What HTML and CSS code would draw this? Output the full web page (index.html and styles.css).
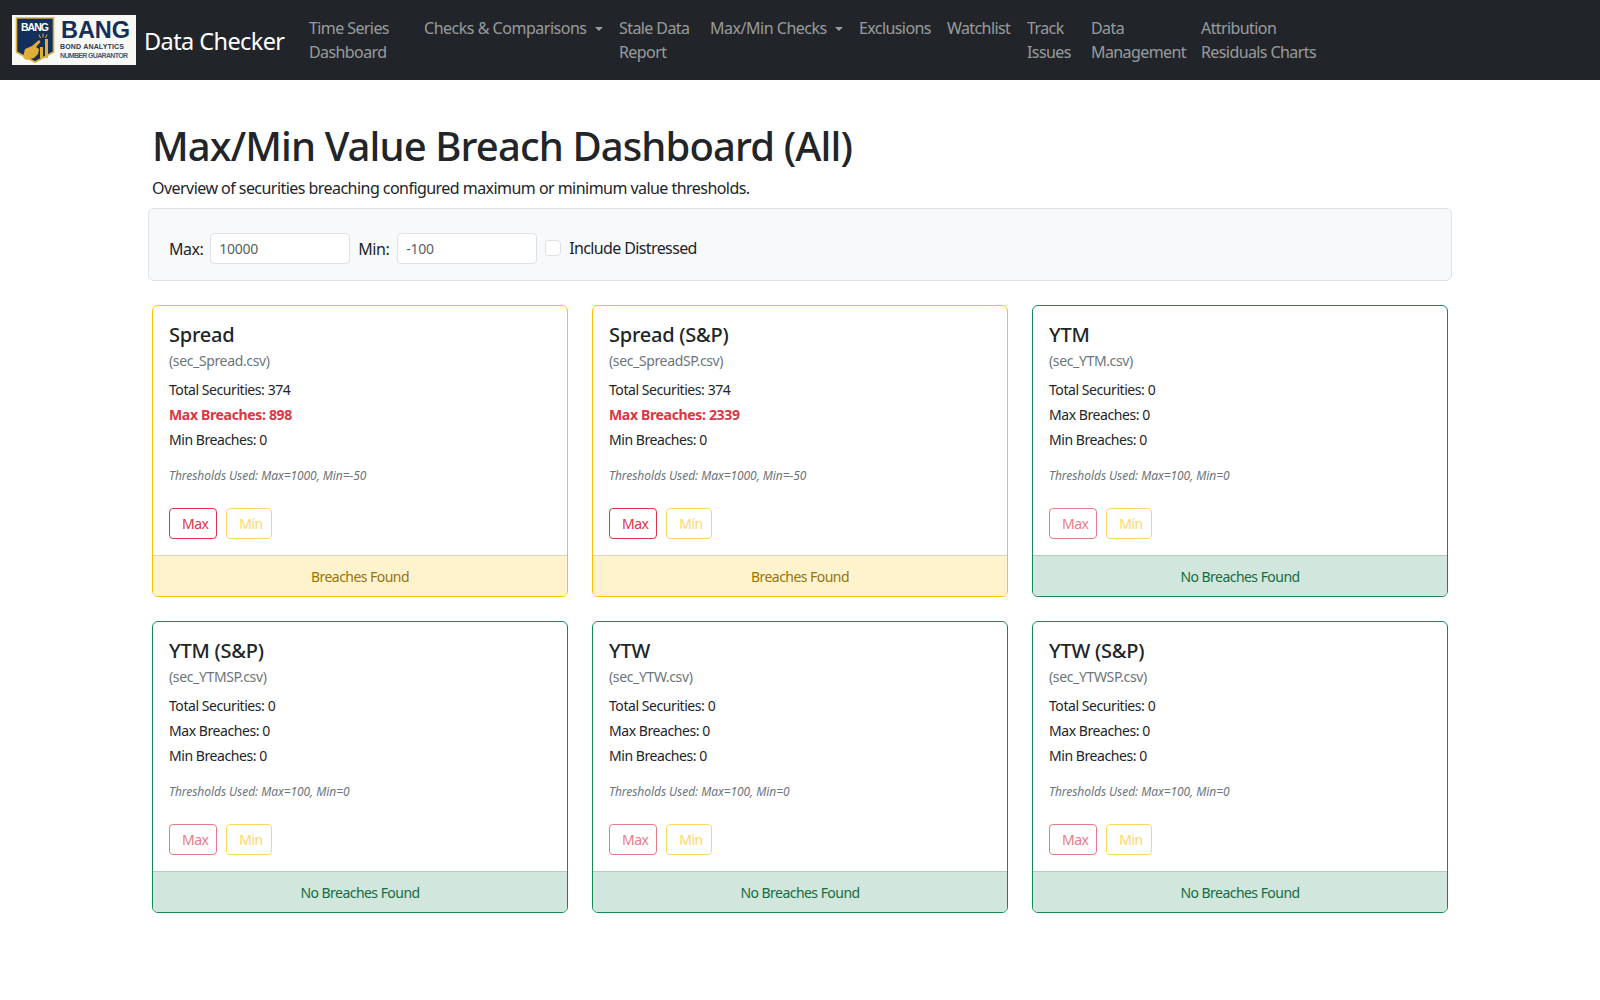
FILE: index.html
```html
<!DOCTYPE html>
<html lang="en">
<head>
    <meta charset="UTF-8">
    <meta name="viewport" content="width=device-width, initial-scale=1.0">
    <title>Max/Min Value Breach Dashboard</title>
    <link rel="stylesheet" href="styles.css">
</head>
<body>
    <nav class="navbar">
        <a class="brand" href="#">
            <svg class="logo" width="124" height="50" viewBox="0 0 124 50">
                <rect width="124" height="50" fill="#f8f8f5"/>
                <path d="M4.5 3H41.5V37L23 47L4.5 37Z" fill="#14305a" stroke="#d8ac3a" stroke-width="1.6"/>
                <text x="23" y="16" class="logo-small" textLength="28">BANG</text>
                <path d="M11 42L13 34L20 31L27 25L28.5 27L24 32L27 34L26 39L22 43L14 45Z" fill="#e0ae35"/>
                <rect x="28" y="32" width="3" height="11" fill="#e0ae35"/>
                <rect x="33" y="24" width="3" height="19" fill="#e0ae35"/>
                <path d="M27 19.5L28.5 23M31 18.5V22.5M35 19.5L33.5 23" stroke="#e0ae35" stroke-width="1"/>
                <text x="49" y="23" class="logo-big" textLength="69">BANG</text>
                <text x="48" y="34" class="logo-line" textLength="64">BOND ANALYTICS</text>
                <text x="48" y="42.5" class="logo-line logo-line-low" textLength="68">NUMBER GUARANTOR</text>
            </svg>
            <span>Data Checker</span>
        </a>
        <ul class="nav-list">
            <li><a href="#">Time Series<br>Dashboard</a></li>
            <li><a href="#" class="dropdown">Checks &amp; Comparisons</a></li>
            <li><a href="#">Stale Data<br>Report</a></li>
            <li><a href="#" class="dropdown">Max/Min Checks</a></li>
            <li><a href="#">Exclusions</a></li>
            <li><a href="#">Watchlist</a></li>
            <li><a href="#">Track<br>Issues</a></li>
            <li><a href="#">Data<br>Management</a></li>
            <li><a href="#">Attribution<br>Residuals Charts</a></li>
        </ul>
    </nav>

    <main class="container">
        <h1>Max/Min Value Breach Dashboard (All)</h1>
        <p class="lead-text">Overview of securities breaching configured maximum or minimum value thresholds.</p>

        <form class="filters">
            <label for="max">Max:</label>
            <input id="max" type="text" value="10000">
            <label for="min">Min:</label>
            <input id="min" type="text" value="-100">
            <input id="distressed" class="check" type="checkbox">
            <label for="distressed" class="check-label">Include Distressed</label>
        </form>

        <div class="cards">
            <div class="card warn">
                <div class="card-body">
                    <h5>Spread</h5>
                    <h6>(sec_Spread.csv)</h6>
                    <p>Total Securities: 374</p>
                    <p class="breach">Max Breaches: 898</p>
                    <p>Min Breaches: 0</p>
                    <p class="thresholds">Thresholds Used: Max=1000, Min=-50</p>
                    <div class="buttons"><a class="btn btn-max" href="#">Max</a><a class="btn btn-min" href="#">Min</a></div>
                </div>
                <div class="card-footer">Breaches Found</div>
            </div>
            <div class="card warn">
                <div class="card-body">
                    <h5>Spread (S&amp;P)</h5>
                    <h6>(sec_SpreadSP.csv)</h6>
                    <p>Total Securities: 374</p>
                    <p class="breach">Max Breaches: 2339</p>
                    <p>Min Breaches: 0</p>
                    <p class="thresholds">Thresholds Used: Max=1000, Min=-50</p>
                    <div class="buttons"><a class="btn btn-max" href="#">Max</a><a class="btn btn-min" href="#">Min</a></div>
                </div>
                <div class="card-footer">Breaches Found</div>
            </div>
            <div class="card ok">
                <div class="card-body">
                    <h5>YTM</h5>
                    <h6>(sec_YTM.csv)</h6>
                    <p>Total Securities: 0</p>
                    <p>Max Breaches: 0</p>
                    <p>Min Breaches: 0</p>
                    <p class="thresholds">Thresholds Used: Max=100, Min=0</p>
                    <div class="buttons"><a class="btn btn-max off" href="#">Max</a><a class="btn btn-min off" href="#">Min</a></div>
                </div>
                <div class="card-footer">No Breaches Found</div>
            </div>
            <div class="card ok">
                <div class="card-body">
                    <h5>YTM (S&amp;P)</h5>
                    <h6>(sec_YTMSP.csv)</h6>
                    <p>Total Securities: 0</p>
                    <p>Max Breaches: 0</p>
                    <p>Min Breaches: 0</p>
                    <p class="thresholds">Thresholds Used: Max=100, Min=0</p>
                    <div class="buttons"><a class="btn btn-max off" href="#">Max</a><a class="btn btn-min off" href="#">Min</a></div>
                </div>
                <div class="card-footer">No Breaches Found</div>
            </div>
            <div class="card ok">
                <div class="card-body">
                    <h5>YTW</h5>
                    <h6>(sec_YTW.csv)</h6>
                    <p>Total Securities: 0</p>
                    <p>Max Breaches: 0</p>
                    <p>Min Breaches: 0</p>
                    <p class="thresholds">Thresholds Used: Max=100, Min=0</p>
                    <div class="buttons"><a class="btn btn-max off" href="#">Max</a><a class="btn btn-min off" href="#">Min</a></div>
                </div>
                <div class="card-footer">No Breaches Found</div>
            </div>
            <div class="card ok">
                <div class="card-body">
                    <h5>YTW (S&amp;P)</h5>
                    <h6>(sec_YTWSP.csv)</h6>
                    <p>Total Securities: 0</p>
                    <p>Max Breaches: 0</p>
                    <p>Min Breaches: 0</p>
                    <p class="thresholds">Thresholds Used: Max=100, Min=0</p>
                    <div class="buttons"><a class="btn btn-max off" href="#">Max</a><a class="btn btn-min off" href="#">Min</a></div>
                </div>
                <div class="card-footer">No Breaches Found</div>
            </div>
        </div>
    </main>
</body>
</html>
```

FILE: styles.css
```css
* {
    box-sizing: border-box;
}
body {
    margin: 0;
    font-family: "Noto Sans", Arial, sans-serif;
    font-size: 16px;
    line-height: 24px;
    letter-spacing: -0.034em;
    color: #212529;
    background: #fff;
}
a {
    text-decoration: none;
}

/* navbar */
.navbar {
    display: flex;
    height: 80px;
    padding: 8px 12px;
    background: #212529;
}
.brand {
    display: flex;
    align-items: center;
    gap: 8px;
    width: 289px;
    color: #fff;
    font-size: 23.5px;
    letter-spacing: -0.025em;
}
.brand span {
    margin-top: 2px;
}
.logo {
    flex: none;
}
.logo text {
    letter-spacing: 0;
}
.logo-small {
    font: 700 10.5px "Liberation Sans", sans-serif;
    fill: #fff;
    text-anchor: middle;
}
.logo-big {
    font: 700 23.5px "Liberation Sans", sans-serif;
    fill: #14305a;
}
.logo-line {
    font: 700 7px "Liberation Sans", sans-serif;
    fill: #2b3c58;
}
.logo-line-low {
    fill: #4a5a70;
}
.nav-list {
    display: grid;
    grid-template-columns: 115px 195px 91px 149px 88px 80px 64px 110px 180px;
    margin: 0;
    padding: 0;
    list-style: none;
}
.nav-list a {
    display: block;
    padding: 8px;
    letter-spacing: -0.037em;
    color: rgba(255, 255, 255, 0.55);
    white-space: nowrap;
}
.nav-list a.dropdown {
    letter-spacing: -0.03em;
}
.dropdown::after {
    content: "";
    display: inline-block;
    margin-left: 8px;
    vertical-align: 3px;
    border-top: 4.8px solid;
    border-left: 4.8px solid transparent;
    border-right: 4.8px solid transparent;
}

/* page */
.container {
    width: 1320px;
    margin: 0 auto;
    padding: 42px 12px 0;
}
h1 {
    margin: 0 0 6px;
    font-size: 40px;
    font-weight: 500;
    line-height: 48px;
    letter-spacing: -0.022em;
}
.lead-text {
    margin: 0 0 8px;
}
.filters {
    display: flex;
    align-items: center;
    height: 73px;
    margin: 0 -4px 24px;
    padding: 8px 20px 0;
    background: #f8f9fa;
    border: 1px solid #dee2e6;
    border-radius: 6px;
}
.filters label {
    letter-spacing: -0.03em;
}
.filters input[type="text"] {
    width: 140px;
    height: 31px;
    margin: 0 8px 0 7px;
    padding: 4px 8px;
    font: inherit;
    font-size: 14px;
    letter-spacing: -0.02em;
    color: #596067;
    background: #fff;
    border: 1px solid #dee2e6;
    border-radius: 4px;
}
.filters input#min {
    margin-left: 8px;
}
.check {
    appearance: none;
    width: 16px;
    height: 16px;
    margin: 0 8px 2px 0;
    background: #fff;
    border: 1px solid #dee2e6;
    border-radius: 4px;
}
.filters .check-label {
    margin-bottom: 2px;
    letter-spacing: -0.039em;
}

/* cards */
.cards {
    display: grid;
    grid-template-columns: repeat(3, 416px);
    gap: 24px;
}
.card {
    display: flex;
    flex-direction: column;
    height: 292px;
    border: 1px solid;
    border-radius: 6px;
    overflow: hidden;
}
.card.warn {
    border-color: #ffc107;
}
.card.ok {
    border-color: #198754;
}
.card-body {
    flex: 1;
    padding: 16px;
}
h5 {
    margin: 1px 0 4px;
    font-size: 20px;
    font-weight: 500;
    line-height: 24px;
    letter-spacing: -0.012em;
}
h6 {
    margin: 0 0 6px;
    font-size: 14px;
    font-weight: 400;
    line-height: 20px;
    letter-spacing: -0.026em;
    color: #6c757d;
}
.card-body p {
    margin: 0;
    font-size: 14px;
    line-height: 25px;
    letter-spacing: -0.031em;
}
.card-body p.breach {
    font-weight: 700;
    letter-spacing: -0.024em;
    color: #dc3545;
}
.card-body p.thresholds {
    margin: 11px 0 20px;
    font-size: 12px;
    font-style: italic;
    letter-spacing: -0.005em;
    color: #6c757d;
}
.buttons {
    display: flex;
    gap: 9px;
}
.btn {
    padding: 4px 8px 4px 12px;
    font-size: 14px;
    line-height: 21px;
    background: #fff;
    border: 1px solid;
    border-radius: 4px;
}
.btn-max {
    color: #dc3545;
    border-color: #dc3545;
}
.btn-min {
    color: #ffc107;
    border-color: #ffc107;
    opacity: 0.65;
}
.btn.off {
    opacity: 0.65;
}
.card-footer {
    height: 41px;
    padding: 9px 16px 0;
    font-size: 14px;
    text-align: center;
    border-top: 1px solid rgba(0, 0, 0, 0.125);
}
.warn .card-footer {
    color: #997404;
    background: #fff3cd;
}
.ok .card-footer {
    color: #146c43;
    background: #d1e7dd;
}
```
